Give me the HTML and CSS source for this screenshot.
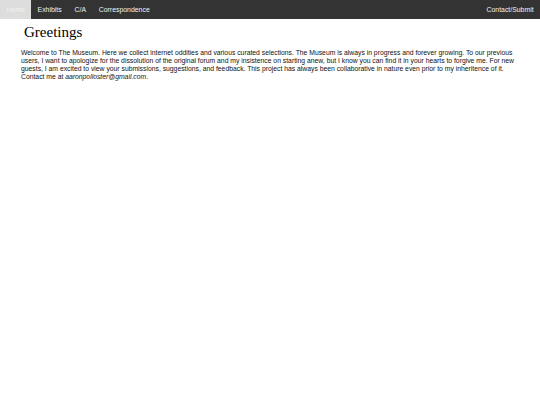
FILE: index.html
```html
<!DOCTYPE html>
<html>
<head>
<meta charset="utf-8">
<link rel="stylesheet" href="styles.css">
</head>
<body>
<nav class="topnav">
  <a class="active" href="#">Home</a>
  <a href="#">Exhibits</a>
  <a href="#">C/A</a>
  <a href="#">Correspondence</a>
  <a class="right" href="#">Contact/Submit</a>
</nav>
<main class="content">
  <h1 class="title">Greetings</h1>
  <p class="intro">Welcome to The Museum. Here we collect internet oddities and various curated selections. The Museum is always in progress and forever growing. To our previous users, I want to apologize for the dissolution of the original forum and my insistence on starting anew, but I know you can find it in your hearts to forgive me. For new guests, I am excited to view your submissions, suggestions, and feedback. This project has always been collaborative in nature even prior to my inheritence of it. Contact me at <em>aaronpolloster@gmail.com</em>.</p>
</main>
</body>
</html>
```

FILE: styles.css
```css
html, body {
  margin: 0;
  padding: 0;
  background: #fff;
}
body {
  font-family: "Liberation Sans", Arial, sans-serif;
}
.topnav {
  display: flex;
  background: #333;
  height: 19px;
}
.topnav a {
  display: block;
  color: #f2f2f2;
  text-decoration: none;
  font-size: 6.9px;
  line-height: 8px;
  padding: 5.5px 6.4px;
}
.topnav a.active {
  background: #ddd;
  color: #f2f2f2;
}
.topnav a.right {
  margin-left: auto;
}
.content {
  padding: 0 20px 0 21px;
}
.title {
  font-family: "Liberation Serif", "Times New Roman", serif;
  font-weight: normal;
  font-size: 15px;
  line-height: 17px;
  margin: 5px 0 8px 3px;
}
.intro {
  font-size: 6.8px;
  line-height: 8px;
  color: #111;
  margin: 0;
}
```
